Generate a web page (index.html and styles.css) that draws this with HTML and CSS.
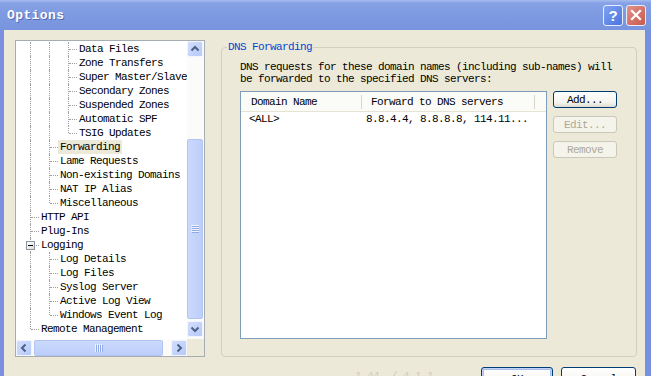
FILE: index.html
```html
<!DOCTYPE html>
<html>
<head>
<meta charset="utf-8">
<link rel="stylesheet" href="styles.css">
</head>
<body>
<div class="window">
  <div class="titlebar">
    <span class="title">Options</span>
    <span class="tbtn help">?</span>
    <span class="tbtn close"><svg width="12" height="12" viewBox="0 0 12 12"><path d="M2 2 L10 10 M10 2 L2 10" stroke="#fff" stroke-width="2.2" stroke-linecap="square"/></svg></span>
  </div>
  <div class="frame">
    <div class="tree">
      <div class="tree-content">
        <div class="row"><span class="c v"></span><span class="c v"></span><span class="c t"></span><span class="lbl">Data Files</span></div>
        <div class="row"><span class="c v"></span><span class="c v"></span><span class="c t"></span><span class="lbl">Zone Transfers</span></div>
        <div class="row"><span class="c v"></span><span class="c v"></span><span class="c t"></span><span class="lbl">Super Master/Slave</span></div>
        <div class="row"><span class="c v"></span><span class="c v"></span><span class="c t"></span><span class="lbl">Secondary Zones</span></div>
        <div class="row"><span class="c v"></span><span class="c v"></span><span class="c t"></span><span class="lbl">Suspended Zones</span></div>
        <div class="row"><span class="c v"></span><span class="c v"></span><span class="c t"></span><span class="lbl">Automatic SPF</span></div>
        <div class="row"><span class="c v"></span><span class="c v"></span><span class="c l"></span><span class="lbl">TSIG Updates</span></div>
        <div class="row"><span class="c v"></span><span class="c t"></span><span class="lbl sel">Forwarding</span></div>
        <div class="row"><span class="c v"></span><span class="c t"></span><span class="lbl">Lame Requests</span></div>
        <div class="row"><span class="c v"></span><span class="c t"></span><span class="lbl">Non-existing Domains</span></div>
        <div class="row"><span class="c v"></span><span class="c t"></span><span class="lbl">NAT IP Alias</span></div>
        <div class="row"><span class="c v"></span><span class="c l"></span><span class="lbl">Miscellaneous</span></div>
        <div class="row"><span class="c t"></span><span class="lbl">HTTP API</span></div>
        <div class="row"><span class="c t"></span><span class="lbl">Plug-Ins</span></div>
        <div class="row"><span class="c t"><span class="exp"></span></span><span class="lbl">Logging</span></div>
        <div class="row"><span class="c v"></span><span class="c t"></span><span class="lbl">Log Details</span></div>
        <div class="row"><span class="c v"></span><span class="c t"></span><span class="lbl">Log Files</span></div>
        <div class="row"><span class="c v"></span><span class="c t"></span><span class="lbl">Syslog Server</span></div>
        <div class="row"><span class="c v"></span><span class="c t"></span><span class="lbl">Active Log View</span></div>
        <div class="row"><span class="c v"></span><span class="c l"></span><span class="lbl">Windows Event Log</span></div>
        <div class="row"><span class="c l"></span><span class="lbl">Remote Management</span></div>
      </div>
      <div class="vscroll">
        <span class="sbtn"><svg width="14" height="14" viewBox="0 0 14 14"><polyline points="3.5,8.5 7,5 10.5,8.5" fill="none" stroke="#4d6185" stroke-width="2"/></svg></span>
        <span class="vtrack"></span>
        <span class="vthumb"><svg width="8" height="8" viewBox="0 0 8 8"><path d="M0 0.5H8M0 2.5H8M0 4.5H8M0 6.5H8" stroke="#eef3fe" stroke-width="1"/><path d="M1 1.5H8M1 3.5H8M1 5.5H8M1 7.5H8" stroke="#8faae6" stroke-width="1"/></svg></span>
        <span class="sbtn"><svg width="14" height="14" viewBox="0 0 14 14"><polyline points="3.5,5.5 7,9 10.5,5.5" fill="none" stroke="#4d6185" stroke-width="2"/></svg></span>
      </div>
      <div class="hscroll">
        <span class="sbtn"><svg width="14" height="14" viewBox="0 0 14 14"><polyline points="8.5,3.5 5,7 8.5,10.5" fill="none" stroke="#4d6185" stroke-width="2"/></svg></span>
        <span class="hthumb"><svg width="8" height="8" viewBox="0 0 8 8"><path d="M0.5 0V8M2.5 0V8M4.5 0V8M6.5 0V8" stroke="#eef3fe" stroke-width="1"/><path d="M1.5 1V8M3.5 1V8M5.5 1V8M7.5 1V8" stroke="#8faae6" stroke-width="1"/></svg></span>
        <span class="htrack"></span>
        <span class="sbtn"><svg width="14" height="14" viewBox="0 0 14 14"><polyline points="5.5,3.5 9,7 5.5,10.5" fill="none" stroke="#4d6185" stroke-width="2"/></svg></span>
      </div>
      <div class="corner"></div>
    </div>
    <div class="right">
      <fieldset class="group">
        <legend>DNS Forwarding</legend>
        <p class="desc">DNS requests for these domain names (including sub-names) will<br>be forwarded to the specified DNS servers:</p>
        <div class="listrow">
          <div class="list">
            <div class="lhead">
              <span class="hc h1">Domain Name</span>
              <span class="hc h2">Forward to DNS servers</span>
              <span class="hc h3"></span>
            </div>
            <div class="litem">
              <span class="d1">&lt;ALL&gt;</span>
              <span class="d2">8.8.4.4, 8.8.8.8, 114.11...</span>
            </div>
          </div>
          <div class="btns">
            <button class="btn focus">Add...</button>
            <button class="btn dis">Edit...</button>
            <button class="btn dis">Remove</button>
          </div>
        </div>
      </fieldset>
      <div class="footer">
        <span class="ver">1.44  / 4.1.1</span>
        <button class="btn big def">OK</button>
        <button class="btn big cancel">Cancel</button>
      </div>
    </div>
  </div>
</div>
</body>
</html>
```

FILE: styles.css
```css
* { box-sizing: border-box; }
html, body { margin: 0; padding: 0; }
body {
  width: 651px; height: 376px; overflow: hidden;
  background: #ece9d8;
  font-family: "Liberation Mono", monospace;
  font-size: 11px; letter-spacing: -0.6px; color: #000;
}
.window { width: 651px; height: 376px; display: flex; flex-direction: column; }
.titlebar {
  height: 30px; flex: none; display: flex; align-items: center;
  padding: 0 5px 0 7px;
  background: linear-gradient(#a6bbef 0, #86a1e5 3px, #7e9ae1 45%, #7894de 100%);
}
.title {
  flex: 1; color: #fff; font-size: 13px; font-weight: bold; letter-spacing: 0.4px;
  text-shadow: 1px 1px 0 #5669b6;
}
.tbtn {
  width: 20px; height: 21px; border: 1px solid #e8eefc; border-radius: 3px;
  display: flex; align-items: center; justify-content: center; margin-left: 3px;
  color: #fff; font-family: "Liberation Sans", sans-serif; font-weight: bold; font-size: 15px; letter-spacing: 0;
}
.help { background: linear-gradient(135deg, #7fa3f2, #4b74e0); }
.close { background: linear-gradient(135deg, #e2928a, #c7584c); }
.frame {
  flex: 1; display: flex; align-items: flex-start; gap: 16px;
  border-left: 4px solid #7b8fe0; border-right: 6px solid #7790e0;
  padding: 10px 9px 0 11px;
}

/* tree */
.tree {
  flex: none; width: 190px; height: 317px; background: #fff;
  border: 1px solid #a5acb2;
  display: grid; grid-template-columns: 171px 17px; grid-template-rows: 298px 17px;
}
.tree-content { padding: 1px 0 0 6px; overflow: hidden; }
.row { display: flex; height: 14px; line-height: 14px; white-space: nowrap; }
.c { flex: none; width: 19px; height: 14px; position: relative; }
.c.v::before, .c.t::before, .c.l::before {
  content: ""; position: absolute; left: 8px; top: 0; bottom: 0;
  border-left: 1px dotted #a0a0a0;
}
.c.l::before { bottom: 7px; }
.c.t::after, .c.l::after {
  content: ""; position: absolute; left: 9px; top: 7px; width: 8px;
  border-top: 1px dotted #a0a0a0;
}
.exp {
  position: absolute; left: 4px; top: 3px; width: 9px; height: 9px; z-index: 1;
  border: 1px solid #8c97a3; background: linear-gradient(135deg, #fff, #dcdcd6);
}
.exp::after {
  content: ""; position: absolute; left: 1px; top: 3px; width: 5px; height: 1px; background: #000;
}
.lbl { margin-left: -2px; padding: 0 2px; }
.lbl.sel { background: #ece9d8; }

.vscroll { display: flex; flex-direction: column; background: #fbfbf9; padding: 0 1px 0 0; }
.hscroll { display: flex; background: #fbfbf9; padding: 1px 0 0 0; }
.corner { background: #ece9d8; }
.sbtn {
  flex: none; width: 16px; height: 16px; border: 1px solid #f1f5fe; border-radius: 2px;
  background: linear-gradient(135deg, #d2defd, #b6c9f7);
  display: flex; align-items: center; justify-content: center;
}
.vtrack { flex: 0 0 82px; }
.vthumb, .hthumb {
  border: 1px solid #b2c5f2; border-radius: 2px;
  background: linear-gradient(90deg, #cbd9fc, #bccffa);
  display: flex; align-items: center; justify-content: center;
}
.vthumb { flex: 0 0 180px; width: 16px; margin-bottom: 2px; }
.hthumb { flex: 0 0 129px; height: 16px; margin-left: 2px; background: linear-gradient(#cbd9fc, #bccffa); }
.htrack { flex: 1; }

/* right */
.right { flex: none; width: 416px; margin-top: 1px; display: flex; flex-direction: column; }
.group {
  margin: 0; border: 1px solid #d0d0bf; border-radius: 4px;
  padding: 8px 17px 17px 18px; min-width: 0;
}
.group legend {
  color: #0046d5; margin-left: -13px; padding: 0 1px; line-height: 12px;
}
.desc { margin: 0; line-height: 12px; white-space: nowrap; }
.listrow { display: flex; gap: 6px; margin-top: 6px; align-items: flex-start; }
.list { flex: none; width: 307px; height: 248px; border: 1px solid #7f9db9; background: #fff; }
.lhead {
  display: flex; height: 20px; background: #fbfbf8;
  border-bottom: 1px solid #e6e3d5;
}
.hc { height: 14px; margin-top: 3px; line-height: 14px; border-right: 1px solid #d9d6c7; white-space: nowrap; }
.h1 { width: 121px; padding-left: 10px; }
.h2 { width: 173px; padding-left: 9px; }
.h3 { flex: 1; border-right: none; }
.litem { display: flex; height: 14px; line-height: 14px; white-space: nowrap; }
.d1 { width: 121px; padding-left: 8px; }
.d2 { padding-left: 4px; }
.btns { display: flex; flex-direction: column; gap: 8px; }
.btn {
  font-family: "Liberation Mono", monospace; font-size: 11px; letter-spacing: -0.6px;
  width: 64px; height: 17px; padding: 0; margin: 0; line-height: 14px;
  border: 1px solid #003c74; border-radius: 3px; color: #000;
  background: linear-gradient(#ffffff, #f4f3ee 70%, #dedbcf);
}
.btn.dis { border-color: #cac8bb; color: #aca899; background: #f5f4ea; }
.footer { display: flex; gap: 8px; margin-top: 10px; align-items: flex-start; padding-right: 1px; }
.ver { margin-left: 134px; margin-right: auto; color: #cfccbe; margin-top: 3px; white-space: pre; }
.btn.big { height: 23px; line-height: 18px; }
.btn.def { width: 72px; box-shadow: inset 0 0 0 1px #c2d2f5, inset 0 0 0 2px #a9bfee; }
.btn.cancel { width: 75px; }
```
